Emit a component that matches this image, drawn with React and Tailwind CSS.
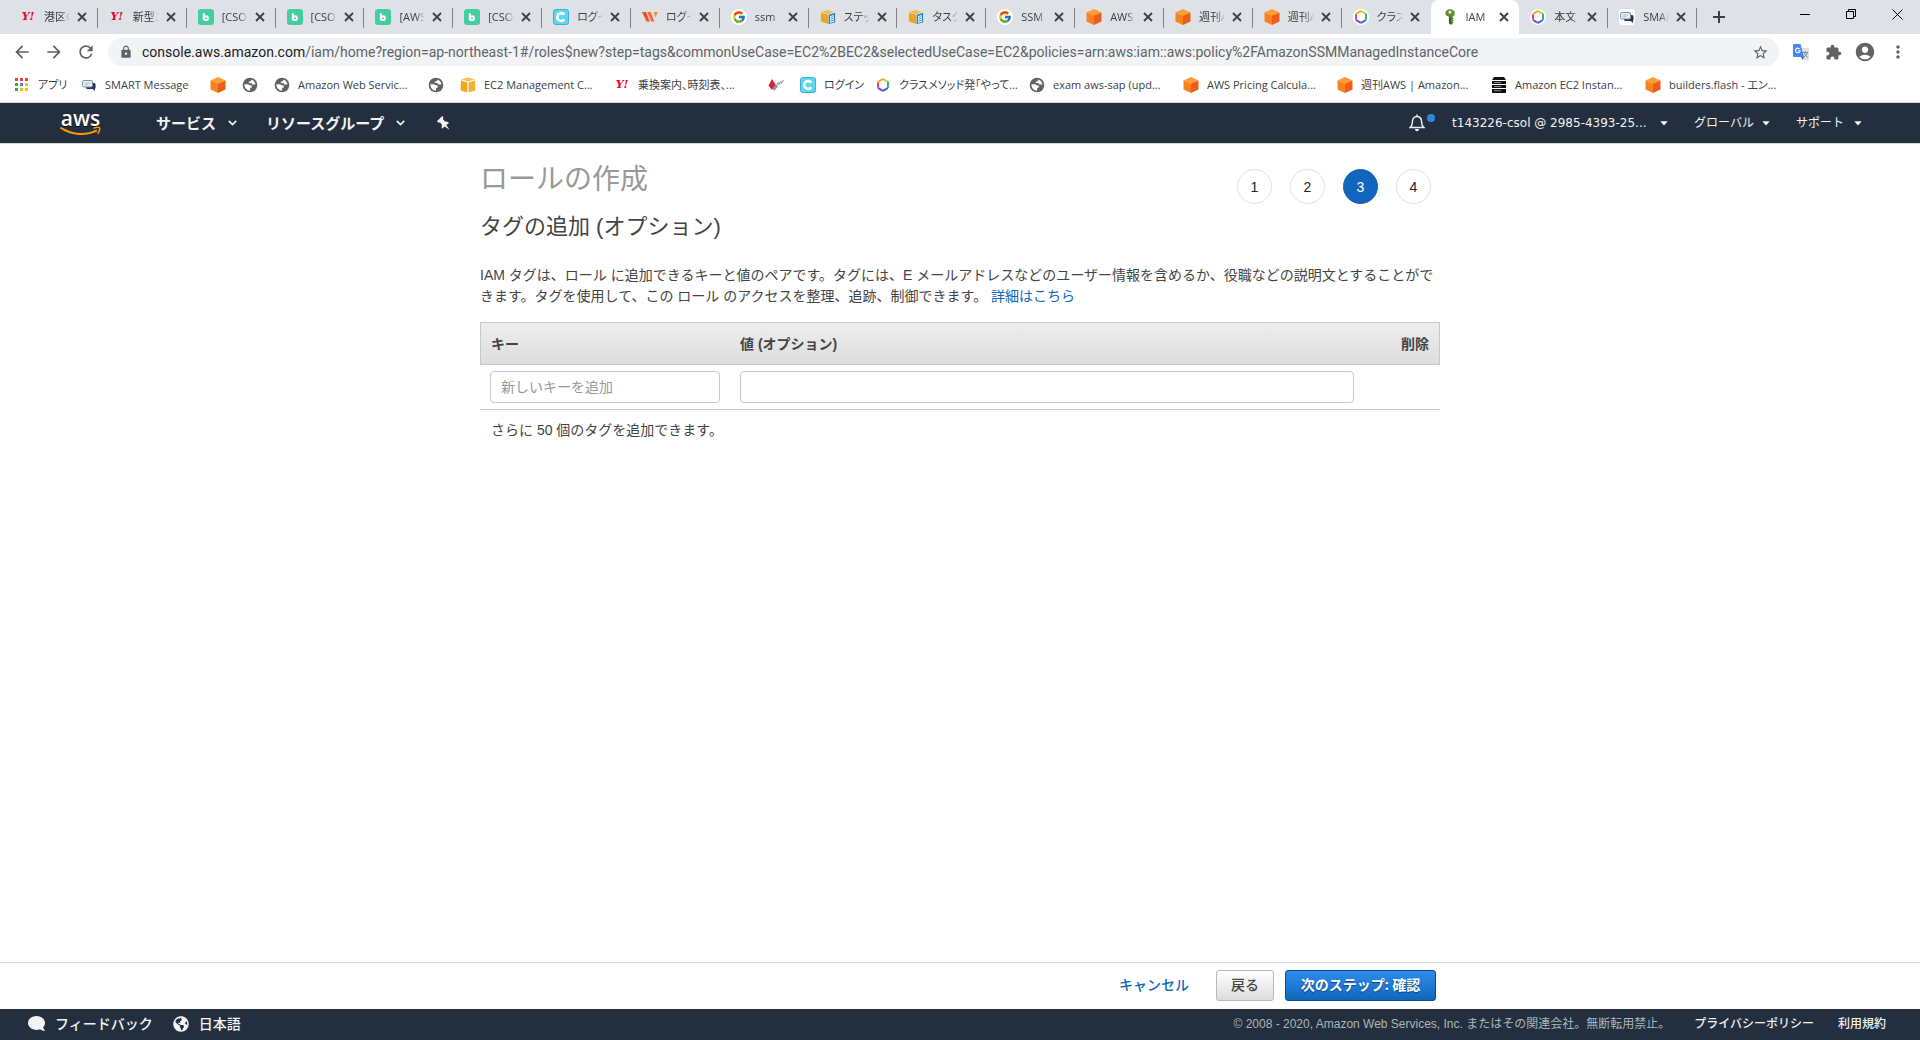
import {
  MdAccountCircle,
  MdArrowBack,
  MdArrowForward,
  MdExtension,
  MdLock,
  MdMoreVert,
  MdRefresh,
  MdStarBorder,
} from 'react-icons/md'
import { FaComment, FaGlobeAmericas } from 'react-icons/fa'
import { FcGoogle } from 'react-icons/fc'

// ---------- favicons ----------

function YahooIcon() {
  return (
    <span className="w-4 text-center font-['DejaVu_Serif','Noto_Sans_CJK_JP',serif] text-[11px] leading-4 font-bold italic text-[#f0002d]">
      Y!
    </span>
  )
}

function BacklogIcon() {
  return (
    <svg width="16" height="16" viewBox="0 0 16 16" fill="none">
      <rect width="16" height="16" rx="3" fill="#42ce9f" />
      <path d="M5.8 4.2v7" stroke="#fff" strokeWidth="2" />
      <circle cx="8" cy="9.2" r="1.9" stroke="#fff" strokeWidth="2" />
    </svg>
  )
}

function CybozuIcon() {
  return (
    <svg width="16" height="16" viewBox="0 0 16 16" fill="none">
      <rect x=".5" y=".5" width="15" height="15" rx="2" fill="#5fd6ef" stroke="#37b4d4" />
      <path d="M11.2 5.6A3.9 3.9 0 1 0 11.2 10.4" stroke="#fff" strokeWidth="2.6" />
    </svg>
  )
}

function WorkIcon() {
  return (
    <svg width="16" height="12" viewBox="0 0 16 12">
      <path d="M0 1h4l3.800 9.500H4.600z" fill="#f4511e" />
      <path d="M5.200 1h3.600l3.600 9.500H9.200z" fill="#fb6a3c" />
      <path d="M11.600 1H16l-2.600 5.500z" fill="#fb8a3c" />
    </svg>
  )
}

function GoogleIcon() {
  return (
    <span className="flex size-4 items-center justify-center rounded-full bg-white">
      <FcGoogle size={14} />
    </span>
  )
}

function OrangeCubeIcon() {
  return (
    <svg width="16" height="16" viewBox="0 0 16 16">
      <path d="M8 0l7.5 3.6L8 6.4.5 3.6z" fill="#ff9d2e" />
      <path d="M.5 3.6L8 6.4V16L.5 12.6z" fill="#f8821f" />
      <path d="M15.5 3.6L8 6.4V16l7.5-3.4z" fill="#ee5c1c" />
    </svg>
  )
}

function YellowCubeIcon() {
  return (
    <svg width="16" height="16" viewBox="0 0 16 16">
      <path d="M8 .5l7 2L8 4.6 1 2.5z" fill="#f7c04a" />
      <path d="M.8 3.6l6.6 2v10L.8 13.4z" fill="#efa81f" />
      <path d="M15.2 3.6l-6.6 2v10l6.6-2.2z" fill="#f2b233" />
    </svg>
  )
}

function StepDocIcon() {
  return (
    <svg width="18" height="16" viewBox="0 0 18 16">
      <path d="M8.5 0l7.5 2.4-7.5 2.4L1 2.400z" fill="#f6bd48" />
      <path d="M1 3.200l8.200 2.200V16L1 13.200z" fill="#eea61e" />
      <path d="M9.800 5.400L17 3.600v10.200L9.800 16z" fill="#2b7fb8" />
      <path d="M11.400 6.800l4-1v7.600l-4 1.200z" fill="#fff" />
      <path d="M12.200 8.400l2.400-.6M12.200 10.400l2.400-.6M12.200 12.400l2.400-.6" stroke="#2b7fb8" strokeWidth="1" />
    </svg>
  )
}

function HexRingIcon() {
  return (
    <svg width="16" height="16" viewBox="0 0 16 16" fill="none" strokeWidth="2" strokeLinecap="round">
      <circle cx="8" cy="8" r="8" fill="#fff" />
      <path d="M8.6 2.4l3.6 2" stroke="#c9cf2b" />
      <path d="M13 5.6v4.6" stroke="#2fae8f" />
      <path d="M12 11.6l-3.6 2" stroke="#2f6fe0" />
      <path d="M7 13.4l-3.4-2" stroke="#7a45d0" />
      <path d="M3 10V5.8" stroke="#e0438c" />
      <path d="M3.8 4.4l3.4-2" stroke="#f7a823" />
    </svg>
  )
}

function KeyIcon() {
  return (
    <svg width="16" height="16" viewBox="0 0 16 16">
      <path
        d="M8 .3C10.800.3 12.800 2 12.800 4.200c0 1.700-1 3-2.300 3.600v.8l1.500.9-1.500 1 1.200 1.100-1.200 1 1 1L9.700 15.800l-2.700-1V7.800C5 7.200 3.300 6 3.300 4.200 3.300 2 5.300.3 8 .3z"
        fill="#5f8f35"
      />
      <path d="M8 7.800h1.200v7.700L7 14.600V7.800z" fill="#3d6420" />
      <path d="M8 1.700v3M6.500 3.200h3" stroke="#fff" strokeWidth="1.300" />
    </svg>
  )
}

function ChatIcon() {
  return (
    <svg width="16" height="16" viewBox="0 0 16 16">
      <rect width="16" height="16" rx="3" fill="#fff" />
      <rect x="5" y="6" width="9.500" height="6" rx="1.500" fill="#24364f" />
      <path d="M11 11.500h3v2.500z" fill="#24364f" />
      <rect x="1.500" y="3.500" width="10" height="6.500" rx="1.500" fill="#eaf0f6" stroke="#7d93aa" />
      <path d="M3.500 6h6M3.500 7.700h4" stroke="#a3b4c5" strokeWidth=".8" />
    </svg>
  )
}

function GlobeIcon() {
  return (
    <svg width="16" height="16" viewBox="0 0 16 16">
      <circle cx="8" cy="8" r="7.300" fill="#5f6368" />
      <path
        d="M2.400 7.200h3.800c1 0 1.300 1.300 2.600 1.300h1v1.200c0 .8-.8 1.200-1.700 1.200v2.700C5 13.700 2.300 11 2.400 7.200zM9.200 2.500c.2 1.300-.2 2-1.400 2-.8 0-1.200.5-1.200 1 .2.700 1.300.600 2.400.6.900 0 .9 1.500 1.800 1.500h2.600c-.1-2.500-1.900-4.500-4.200-5.100z"
        fill="#fff"
      />
    </svg>
  )
}

function RedDiamondIcon() {
  return (
    <svg width="16" height="16" viewBox="0 0 16 16">
      <path d="M4 2l3.500 5.500L4 13 .5 8.500z" fill="#e01f2d" />
      <path d="M4.500 12l3-5 2.500 2.500-3.500 4z" fill="#8b8e93" />
      <path d="M8.500 8l1.500-2 1 1.500 1.500-2.700 1 1.200L15.500 3" fill="none" stroke="#9b9ea3" strokeWidth="1.200" />
    </svg>
  )
}

function ServerIcon() {
  return (
    <svg width="16" height="16" viewBox="0 0 16 16">
      <path d="M3 0h10l2 3H1zM1 4h14v3H1zM1 8h14v3H1zM1 12h14v4H1z" fill="#111" />
      <path d="M3 5.500h7M3 9.500h7M3 13.700h7" stroke="#aaa" strokeWidth=".8" />
    </svg>
  )
}

function AppsIcon() {
  const dots = [
    '#ea4335', '#ea4335', '#ea4335',
    '#34a853', '#4285f4', '#fbbc05',
    '#34a853', '#fbbc05', '#fbbc05',
  ]
  return (
    <svg width="16" height="16" viewBox="0 0 16 16">
      {dots.map((fill, i) => (
        <rect key={i} x={1 + (i % 3) * 5} y={1 + Math.floor(i / 3) * 5} width="3" height="3" fill={fill} />
      ))}
    </svg>
  )
}

function TranslateIcon() {
  return (
    <svg width="16" height="16" viewBox="0 0 16 16" fill="none">
      <path d="M6 4h10v12H9z" fill="#dcdfe3" />
      <path d="M10 8.500h5M12.500 7.300v1.200M14.200 8.500c-.4 2-1.900 3.700-3.500 4.600M11.200 9.500c.7 1.600 2 2.900 3.500 3.700" stroke="#6b7f8f" strokeWidth=".9" />
      <path d="M0 1a1 1 0 0 1 1-1h6.500L11 13H1a1 1 0 0 1-1-1z" fill="#4587f4" />
      <path d="M8.300 13H11l-1.600 2.800z" fill="#2a56c6" />
      <path d="M6.600 5A2.300 2.300 0 1 0 7.100 6.700H5" stroke="#fff" strokeWidth="1.100" />
    </svg>
  )
}

// ---------- data ----------

const TABS = [
  { label: '港区の', Icon: YahooIcon },
  { label: '新型コ', Icon: YahooIcon },
  { label: '[CSOL', Icon: BacklogIcon },
  { label: '[CSOL', Icon: BacklogIcon },
  { label: '[AWS', Icon: BacklogIcon },
  { label: '[CSOL', Icon: BacklogIcon },
  { label: 'ログイ', Icon: CybozuIcon },
  { label: 'ログイ', Icon: WorkIcon },
  { label: 'ssm', Icon: GoogleIcon },
  { label: 'ステッ', Icon: StepDocIcon },
  { label: 'タスク', Icon: StepDocIcon },
  { label: 'SSM', Icon: GoogleIcon },
  { label: 'AWS', Icon: OrangeCubeIcon },
  { label: '週刊A', Icon: OrangeCubeIcon },
  { label: '週刊A', Icon: OrangeCubeIcon },
  { label: 'クラス', Icon: HexRingIcon },
  { label: 'IAM', Icon: KeyIcon, active: true },
  { label: '本文', Icon: HexRingIcon },
  { label: 'SMAR', Icon: ChatIcon },
]

const BOOKMARKS = [
  { label: 'アプリ', Icon: AppsIcon, width: 'w-[27px]' },
  { label: 'SMART Message', Icon: ChatIcon, width: 'w-[89px]' },
  { Icon: OrangeCubeIcon },
  { Icon: GlobeIcon },
  { label: 'Amazon Web Servic...', Icon: GlobeIcon, width: 'w-[114px]' },
  { Icon: GlobeIcon },
  { label: 'EC2 Management C...', Icon: YellowCubeIcon, width: 'w-[114px]' },
  { label: '乗換案内、時刻表、...', Icon: YahooIcon, width: 'w-[114px]' },
  { Icon: RedDiamondIcon },
  { label: 'ログイン', Icon: CybozuIcon, width: 'w-[35px]' },
  { label: 'クラスメソッド発「やって...', Icon: HexRingIcon, width: 'w-[114px]' },
  { label: 'exam aws-sap (upd...', Icon: GlobeIcon, width: 'w-[114px]' },
  { label: 'AWS Pricing Calcula...', Icon: OrangeCubeIcon, width: 'w-[114px]' },
  { label: '週刊AWS | Amazon...', Icon: OrangeCubeIcon, width: 'w-[114px]' },
  { label: 'Amazon EC2 Instan...', Icon: ServerIcon, width: 'w-[114px]' },
  { label: 'builders.flash - エン...', Icon: OrangeCubeIcon, width: 'w-[114px]' },
]

const STEPS = [1, 2, 3, 4]
const CURRENT_STEP = 3

// ---------- browser chrome ----------

function Tab({ label, Icon, active, divider }) {
  return (
    <div className={`relative flex h-full min-w-0 flex-1 items-center pl-[11px] ${active ? 'rounded-t-lg bg-white' : ''}`}>
      <button type="button" className="flex items-center gap-2 text-[#3c4043]">
        <span className="flex w-4 shrink-0 justify-center"><Icon /></span>
        <span className="w-[26px] overflow-hidden text-left whitespace-nowrap [font-feature-settings:'palt'] [mask-image:linear-gradient(to_right,black_65%,transparent)]">
          {label}
        </span>
      </button>
      <button type="button" aria-label="閉じる" className="ml-1 flex size-4 items-center justify-center text-[#3c4043]">
        <svg width="10" height="10" viewBox="0 0 10 10" stroke="currentColor" strokeWidth="1.800">
          <path d="M1 1l8 8M9 1l-8 8" />
        </svg>
      </button>
      {divider && <span className="absolute top-2 right-0 h-5 w-px bg-[#808387]" />}
    </div>
  )
}

function TabStrip() {
  return (
    <div className="flex h-[34px] bg-[#dee1e6] pl-[9px] text-[11px]">
      <div className="flex min-w-0 flex-1">
        {TABS.map((tab, i) => (
          <Tab key={i} {...tab} divider={!tab.active && !TABS[i + 1]?.active} />
        ))}
      </div>
      <button type="button" aria-label="新しいタブ" className="mr-[41px] flex w-11 items-center justify-center text-[#3c4043]">
        <svg width="12" height="12" viewBox="0 0 12 12" stroke="currentColor" strokeWidth="2">
          <path d="M6 0v12M0 6h12" />
        </svg>
      </button>
      <div className="flex h-7 text-black">
        <button type="button" aria-label="最小化" className="flex w-[46px] items-center justify-center">
          <svg width="10" height="10" viewBox="0 0 10 10" stroke="currentColor"><path d="M0 5.500h10" /></svg>
        </button>
        <button type="button" aria-label="元に戻す" className="flex w-[46px] items-center justify-center">
          <svg width="10" height="10" viewBox="0 0 10 10" fill="none" stroke="currentColor">
            <path d="M.5 2.500h7v7h-7zM2.500 2.500v-2h7v7h-2" />
          </svg>
        </button>
        <button type="button" aria-label="閉じる" className="flex w-[46px] items-center justify-center">
          <svg width="11" height="11" viewBox="0 0 11 11" stroke="currentColor"><path d="M.5.5l10 10M10.500.5l-10 10" /></svg>
        </button>
      </div>
    </div>
  )
}

function Toolbar() {
  return (
    <div className="flex h-9 items-center gap-3 bg-white px-3 text-[#5f6368]">
      <button type="button" aria-label="戻る"><MdArrowBack size={20} /></button>
      <button type="button" aria-label="進む"><MdArrowForward size={20} /></button>
      <button type="button" aria-label="再読み込み"><MdRefresh size={20} /></button>
      <div className="flex h-7 min-w-0 flex-1 items-center rounded-full bg-[#f1f3f4] pr-2.5 pl-[11px]">
        <MdLock size={14} className="shrink-0" />
        <p className="ml-[9px] min-w-0 flex-1 overflow-hidden font-['Roboto','Noto_Sans_CJK_JP',sans-serif] text-sm whitespace-nowrap">
          <span className="text-[#202124]">console.aws.amazon.com</span>
          /iam/home?region=ap-northeast-1#/roles$new?step=tags&amp;commonUseCase=EC2%2BEC2&amp;selectedUseCase=EC2&amp;policies=arn:aws:iam::aws:policy%2FAmazonSSMManagedInstanceCore
        </p>
        <button type="button" aria-label="ブックマークに追加"><MdStarBorder size={17} /></button>
      </div>
      <button type="button" aria-label="翻訳" className="ml-0.5"><TranslateIcon /></button>
      <button type="button" aria-label="拡張機能" className="ml-1"><MdExtension size={17} /></button>
      <button type="button" aria-label="アカウント"><MdAccountCircle size={22} /></button>
      <button type="button" aria-label="メニュー"><MdMoreVert size={20} /></button>
    </div>
  )
}

function BookmarkBar() {
  return (
    <nav className="flex h-[33px] items-center gap-4 overflow-hidden border-b border-[#d5d7da] bg-white px-3.5 pb-0.5 text-[11px] text-[#3c4043]">
      {BOOKMARKS.map(({ label, Icon, width }, i) => (
        <a key={i} href="#" aria-label={label ?? 'ブックマーク'} className="flex shrink-0 items-center gap-2">
          <span className="flex w-4 justify-center"><Icon /></span>
          {label && <span className={`${width} whitespace-nowrap [font-feature-settings:'palt']`}>{label}</span>}
        </a>
      ))}
    </nav>
  )
}

// ---------- AWS console ----------

function Chevron() {
  return (
    <svg width="9" height="6" viewBox="0 0 9 6" fill="none" stroke="currentColor" strokeWidth="1.700">
      <path d="M.8.8L4.500 4.600 8.200.8" />
    </svg>
  )
}

function Caret() {
  return (
    <svg width="8" height="5" viewBox="0 0 8 5" fill="currentColor">
      <path d="M.3.3h7.400L4 4.400z" />
    </svg>
  )
}

function AwsLogo() {
  return (
    <a href="#" aria-label="aws" className="flex w-[41px] flex-col items-center text-white">
      <span className="font-['Open_Sans','Noto_Sans_CJK_JP',sans-serif] text-[21px] leading-4 font-semibold">aws</span>
      <svg width="41" height="10" viewBox="0 0 41 10" fill="none">
        <path d="M.5 1.600C12 9.500 26 9.800 37 4.400" stroke="#ff9900" strokeWidth="2" />
        <path d="M33.500 2.200c2.600-.9 5-1.200 6-.5.800.8-.3 4-1.900 6" stroke="#ff9900" strokeWidth="1.500" />
      </svg>
    </a>
  )
}

function ConsoleHeader() {
  return (
    <header className="flex h-10 items-center bg-[#232f3e] pr-[58px] pl-[60px] text-[#f2f3f3] [text-shadow:0_1px_0_#000]">
      <AwsLogo />
      <nav className="ml-[55px] flex items-center text-[15px] font-bold">
        <button type="button" className="flex items-center gap-3">サービス<Chevron /></button>
        <button type="button" className="ml-[29px] flex items-center gap-3">リソースグループ<Chevron /></button>
        <button type="button" aria-label="ピン留め" className="ml-8">
          <svg width="13" height="14" viewBox="0 0 13 14" fill="currentColor">
            <path d="M5.200 0l1 .9-.1 2.300L7.900 5.600c1.500-.3 3.300.3 4.200 1.500L9.300 9l3.200 4.700L7.600 10.600l-2.500 2.100c-.7-1.100-.6-2.700 0-3.800L3.200 6.700.8 6.300 0 5.200z" />
          </svg>
        </button>
      </nav>
      <nav className="ml-auto flex items-center text-xs">
        <button type="button" aria-label="通知" className="relative mr-[27px]">
          <svg width="16" height="18" viewBox="0 0 16 18" fill="none" stroke="currentColor" strokeWidth="1.400">
            <path d="M8 .5v1.700M1 13.500h14c-2-1.500-2.400-3-2.400-5.500C12.600 4.500 10.800 2.500 8 2.500S3.400 4.500 3.400 8c0 2.500-.4 4-2.400 5.500z" />
            <path d="M6 15h4c0 1.400-.8 2.200-2 2.200S6 16.400 6 15z" fill="currentColor" stroke="none" />
          </svg>
          <span className="absolute top-0 -right-2.5 size-2 rounded-full bg-[#2e86de]" />
        </button>
        <button type="button" className="flex w-[216px] items-center justify-between font-['DejaVu_Sans','Noto_Sans_CJK_JP',sans-serif]">
          t143226-csol @ 2985-4393-25...<Caret />
        </button>
        <button type="button" className="ml-[26px] flex items-center gap-2">グローバル<Caret /></button>
        <button type="button" className="ml-[26px] flex items-center gap-2.5">サポート<Caret /></button>
      </nav>
    </header>
  )
}

function StepIndicator() {
  return (
    <ol className="mt-[5px] mr-[9px] flex gap-[18px]">
      {STEPS.map((n) => (
        <li
          key={n}
          className={`flex size-[35px] items-center justify-center rounded-full border text-sm ${
            n === CURRENT_STEP ? 'border-[#1166bb] bg-[#1166bb] text-white' : 'border-[#e1e1e1] text-[#222]'
          }`}
        >
          {n}
        </li>
      ))}
    </ol>
  )
}

function TagTable() {
  const th = 'h-[43px] border-y border-[#c8c8c8] px-2.5 font-bold'
  const td = 'border-b border-[#c8c8c8] px-2.5 py-1.5'
  const input = 'block h-8 w-full rounded border border-[#c8c8c8] px-2.5 text-sm placeholder:text-[#999]'
  return (
    <table className="mt-[15px] w-full table-fixed border-separate border-spacing-0 text-sm">
      <thead className="bg-linear-to-b from-[#eeeeee] to-[#dddddd] text-left">
        <tr>
          <th id="tag-key" className={`${th} w-[250px] border-l`}>キー</th>
          <th id="tag-value" className={th}>値 (オプション)</th>
          <th className={`${th} w-[76px] border-r text-right`}>削除</th>
        </tr>
      </thead>
      <tbody>
        <tr>
          <td className={td}>
            <input type="text" aria-labelledby="tag-key" placeholder="新しいキーを追加" className={input} />
          </td>
          <td className={td}>
            <input type="text" aria-labelledby="tag-value" className={input} />
          </td>
          <td className={td} />
        </tr>
      </tbody>
    </table>
  )
}

function RolePage() {
  return (
    <main className="flex-1 border-t border-[#d5d9d9] font-['Liberation_Sans','Noto_Sans_CJK_JP',sans-serif] text-sm text-[#444]">
      <div className="mx-auto max-w-[960px] pt-5">
        <div className="flex items-start justify-between">
          <h1 className="text-[28px] leading-8 text-[#999]">ロールの作成</h1>
          <StepIndicator />
        </div>
        <h2 className="mt-[9px] text-[22px] leading-7">タグの追加 (オプション)</h2>
        <p className="mt-6 leading-[21px]">
          IAM タグは、ロール に追加できるキーと値のペアです。タグには、E メールアドレスなどのユーザー情報を含めるか、役職などの説明文とすることができます。タグを使用して、この ロール のアクセスを整理、追跡、制御できます。{' '}
          <a href="#" className="text-[#1166bb]">詳細はこちら</a>
        </p>
        <TagTable />
        <p className="mt-2.5 px-[11px] leading-[21px]">さらに 50 個のタグを追加できます。</p>
      </div>
    </main>
  )
}

function ActionBar() {
  return (
    <div className="border-t border-[#d5d5d5] bg-white text-sm">
      <div className="mx-auto flex h-[46px] max-w-[960px] items-center justify-end pr-1 pb-0.5">
        <button type="button" className="mr-[27px] font-medium text-[#1166bb]">キャンセル</button>
        <button type="button" className="mr-[11px] h-[31px] w-[58px] rounded-[3px] border border-[#b8b8b8] bg-linear-to-b from-white to-[#dddddd] font-medium text-[#444]">
          戻る
        </button>
        <button type="button" className="h-[31px] w-[151px] rounded-[3px] border border-[#0b4a8f] bg-linear-to-b from-[#2e8def] to-[#1166bb] font-bold whitespace-nowrap text-white [text-shadow:0_1px_1px_#0b3f78]">
          次のステップ: 確認
        </button>
      </div>
    </div>
  )
}

function ConsoleFooter() {
  return (
    <footer className="flex h-[31px] items-center bg-[#232f3e] pr-[34px] pb-0.5 pl-7 text-xs text-[#f2f3f3]">
      <a href="#" className="flex items-center gap-2.5 text-sm font-medium">
        <FaComment size={17} className="-scale-x-100" />
        フィードバック
      </a>
      <button type="button" className="ml-5 flex items-center gap-2.5 text-sm font-medium">
        <FaGlobeAmericas size={16} />
        日本語
      </button>
      <p className="ml-auto font-['Liberation_Sans','Noto_Sans_CJK_JP',sans-serif] text-[#aab7b8]">
        © 2008 - 2020, Amazon Web Services, Inc. またはその関連会社。無断転用禁止。
      </p>
      <a href="#" className="ml-6 font-medium">プライバシーポリシー</a>
      <a href="#" className="ml-6 font-medium">利用規約</a>
    </footer>
  )
}

export default function App() {
  return (
    <div className="flex min-h-screen flex-col bg-white font-['Open_Sans','Noto_Sans_CJK_JP',sans-serif]">
      <TabStrip />
      <Toolbar />
      <BookmarkBar />
      <ConsoleHeader />
      <RolePage />
      <ActionBar />
      <ConsoleFooter />
    </div>
  )
}
